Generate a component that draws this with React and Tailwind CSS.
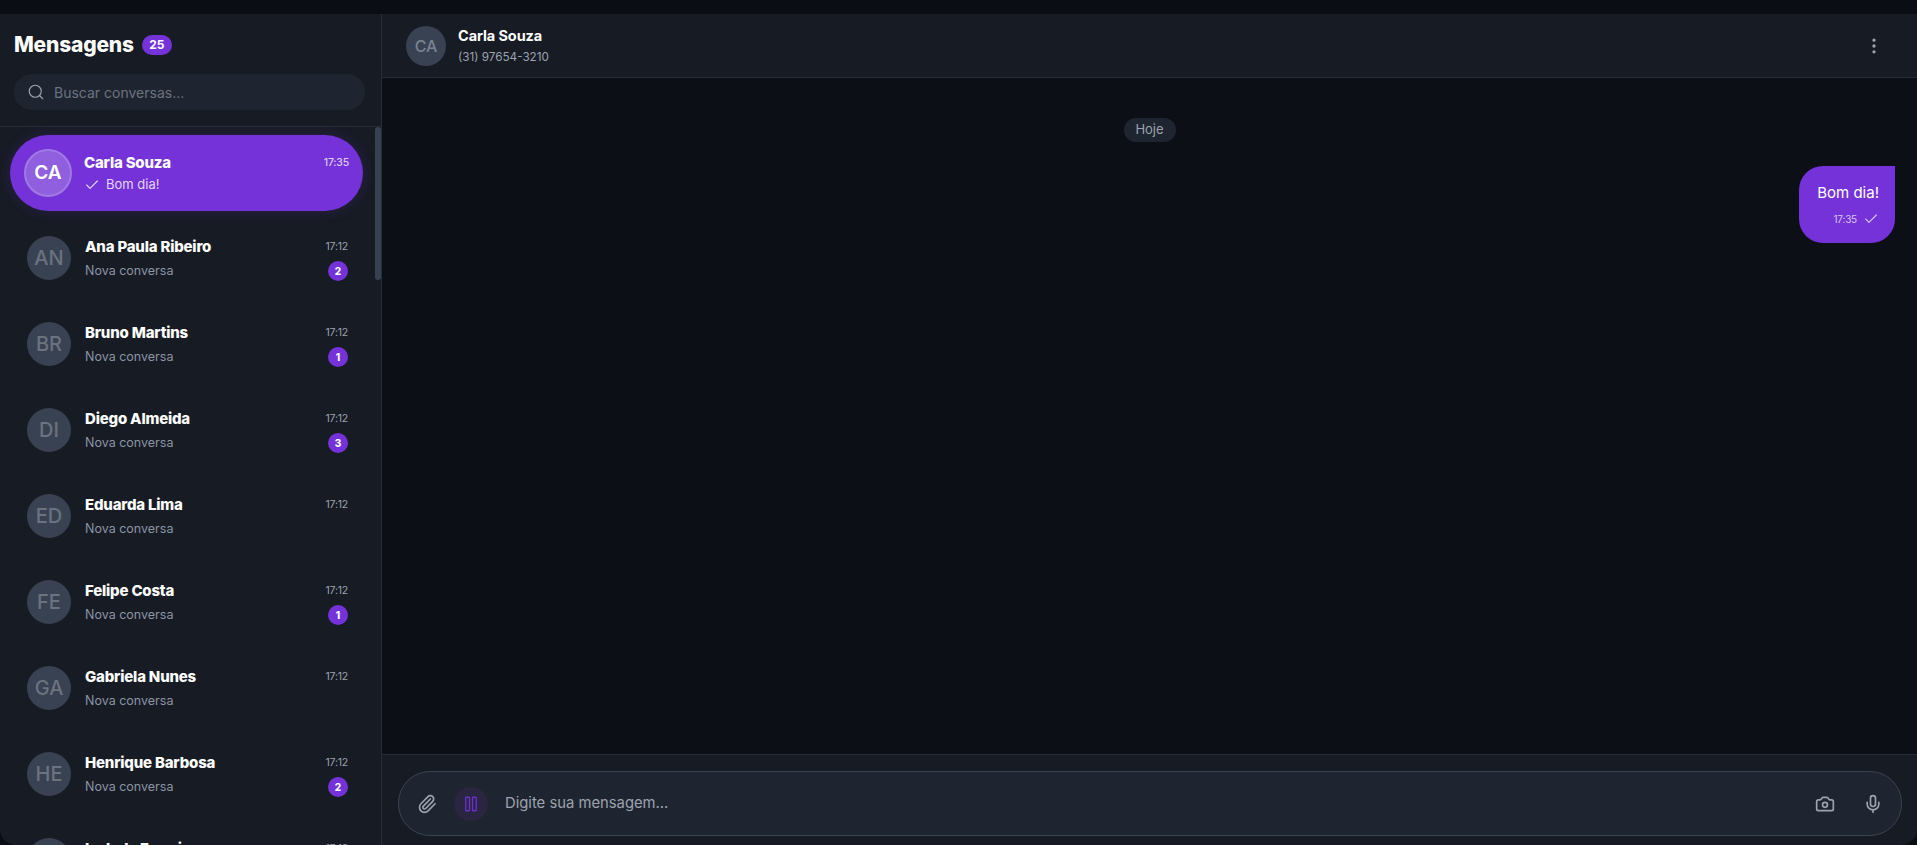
import React from "react";
import { Search, Check, MoreVertical, Paperclip, Camera, Mic, Pause } from "lucide-react";

const font = "font-['Inter','Liberation_Sans',sans-serif]";
const chats = [
  ["AN", "Ana Paula Ribeiro", 2],
  ["BR", "Bruno Martins", 1],
  ["DI", "Diego Almeida", 3],
  ["ED", "Eduarda Lima", 0],
  ["FE", "Felipe Costa", 1],
  ["GA", "Gabriela Nunes", 0],
  ["HE", "Henrique Barbosa", 2],
  ["IS", "Isabela Ferreira", 0],
];

function Row({ initials, name, unread }) {
  return (
    <div className="flex h-[86px] shrink-0 items-start pl-[27px] pr-[33px] pt-[15px]">
      <div className="flex size-[44px] shrink-0 items-center justify-center rounded-full bg-[#394252] text-[20px] font-medium text-[#6b7280]">
        {initials}
      </div>
      <div className="ml-[14px] min-w-0 flex-1">
        <div className="flex h-[22px] items-center justify-between">
          <span className="text-[15px] font-extrabold tracking-[-0.2px] text-white">{name}</span>
          <span className="text-[10.5px] tracking-[-0.2px] text-[#9ca3af]">17:12</span>
        </div>
        <div className="mt-[1px] flex h-[24px] items-center justify-between">
          <span className="text-[12.5px] text-[#8b95a5]">Nova conversa</span>
          {unread > 0 && (
            <span className="flex size-[20px] items-center justify-center rounded-full bg-[#7432d8] text-[10px] font-extrabold text-white">
              {unread}
            </span>
          )}
        </div>
      </div>
    </div>
  );
}

export default function App() {
  return (
    <div className={`h-[845px] w-full overflow-hidden bg-[#0a0d14] pt-[14px] ${font}`}>
      <div className="flex h-[831px] overflow-hidden rounded-b-[16px]">
        <aside className="relative flex w-[382px] shrink-0 flex-col border-r border-[#262c38] bg-[#171b24]">
          <div className="h-[113px] shrink-0 border-b border-[#262c38] px-[14px] pt-[19px]">
            <div className="flex h-[24px] items-center">
              <h1 className="text-[21px] font-extrabold tracking-[-0.2px] text-white">Mensagens</h1>
              <span className="ml-[8px] flex h-[20px] w-[30px] items-center justify-center rounded-full bg-[#7432d8] text-[12px] font-bold text-white">25</span>
            </div>
            <div className="mt-[17px] flex h-[36px] w-[351px] items-center rounded-[18px] bg-[#1f2530] pl-[13px]">
              <Search className="size-[18px] text-[#9ca3af]" strokeWidth={1.5} />
              <span className="ml-[9px] text-[14px] text-[#6b7280]">Buscar conversas...</span>
            </div>
          </div>
          <div className="relative flex-1 overflow-hidden">
            <div className="ml-[10px] mt-[8px] flex h-[76px] w-[353px] items-center rounded-[38px] bg-[#7432d8] pl-[14px] pr-[14px] shadow-[0_0_14px_rgba(116,50,216,0.22)]">
              <div className="flex size-[48px] shrink-0 items-center justify-center rounded-full border-2 border-[#a27ae4] bg-[#8f5fdf] text-[19px] font-semibold text-white">CA</div>
              <div className="ml-[12px] min-w-0 flex-1">
                <div className="mt-[1px] flex h-[22px] items-center justify-between">
                  <span className="text-[15px] font-extrabold tracking-[-0.2px] text-white">Carla Souza</span>
                  <span className="text-[10.5px] font-medium tracking-[-0.2px] text-[#dccbf6]">17:35</span>
                </div>
                <div className="mt-[1px] flex items-center text-[13px] text-[#e3d6f8]">
                  <Check className="mr-[6px] size-[16px]" strokeWidth={1.75} />
                  Bom dia!
                </div>
              </div>
            </div>
            <div className="flex flex-col pt-[10px]">
              {chats.map(([i, n, u]) => <Row key={i} initials={i} name={n} unread={u} />)}
            </div>
            <div className="absolute right-0 top-0 h-[153px] w-[6px] rounded-full bg-[#374151]" />
          </div>
        </aside>

        <main className="flex min-w-0 flex-1 flex-col bg-[#0c0f16]">
          <header className="flex h-[64px] shrink-0 items-center border-b border-[#262c38] bg-[#171b24] pl-[24px] pr-[33px]">
            <div className="flex size-[40px] items-center justify-center rounded-full bg-[#394252] text-[16px] font-medium text-[#7a8392]">CA</div>
            <div className="ml-[12px] flex-1">
              <div className="text-[14.5px] font-bold leading-[20px] tracking-[-0.1px] text-white">Carla Souza</div>
              <div className="mt-[3px] text-[11.7px] leading-[16px] text-[#9ca3af]">(31) 97654-3210</div>
            </div>
            <MoreVertical className="size-[20px] text-[#9ca3af]" strokeWidth={2} />
          </header>

          <section className="flex flex-1 flex-col px-[22px] pt-[40px]">
            <div className="mx-auto flex h-[24px] w-[52px] items-center justify-center rounded-full bg-[#1f2530] text-[13px] text-[#9ca3af]">Hoje</div>
            <div className="mt-[24px] flex justify-end">
              <div className="flex h-[77px] w-[96px] flex-col rounded-[24px] rounded-tr-none bg-[#7432d8] px-[16px] pt-[17px]">
                <div className="text-right text-[15px] leading-[20px] text-white">Bom dia!</div>
                <div className="mt-[8px] flex items-center justify-end text-[10px] tracking-[-0.2px] text-[#d8c4f5]">
                  17:35
                  <Check className="ml-[6px] size-[16px]" strokeWidth={1.75} />
                </div>
              </div>
            </div>
          </section>

          <footer className="h-[91px] shrink-0 border-t border-[#262c38] bg-[#171b24] pl-[16px] pr-[15px] pt-[16px]">
            <div className="flex h-[65px] items-center rounded-[32px] border border-[#3a4352] bg-[#1f2530] pl-[18px] pr-[18px]">
              <Paperclip className="size-[20px] text-[#9ca3af]" strokeWidth={2} />
              <div className="ml-[17px] flex size-[34px] items-center justify-center rounded-full bg-[#2a2540]">
                <Pause className="size-[18px] text-[#6d2fd0]" strokeWidth={1.75} />
              </div>
              <span className="ml-[17px] flex-1 text-[14.8px] text-[#9ca3af]">Digite sua mensagem...</span>
              <Camera className="size-[20px] text-[#9ca3af]" strokeWidth={2} />
              <Mic className="ml-[28px] size-[20px] text-[#9ca3af]" strokeWidth={2} />
            </div>
          </footer>
        </main>
      </div>
    </div>
  );
}
